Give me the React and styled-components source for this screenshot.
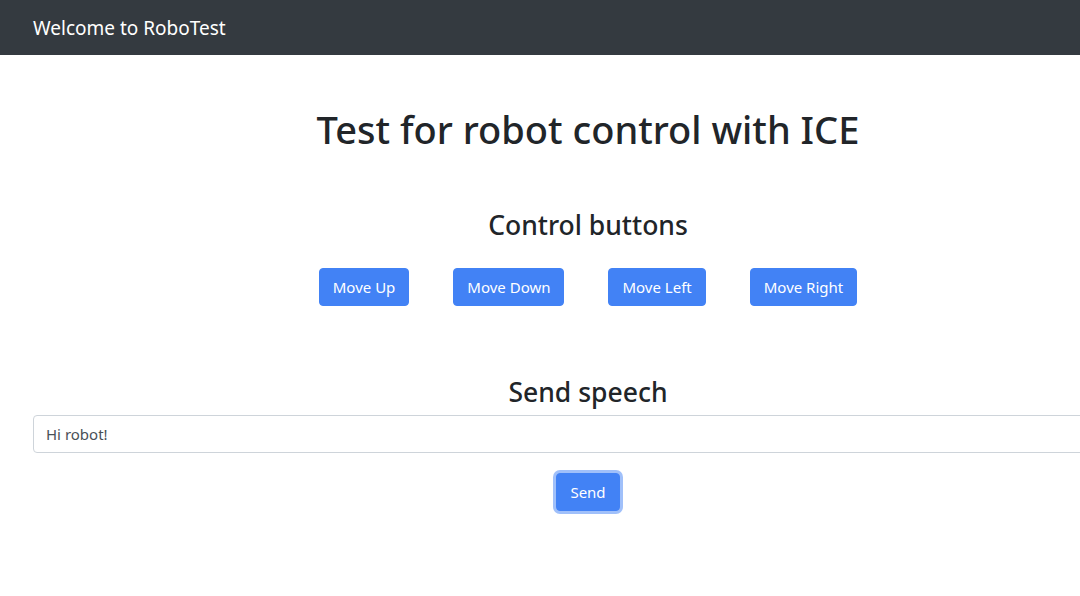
import styled, { createGlobalStyle } from "styled-components"

const GlobalStyle = createGlobalStyle`
  * { box-sizing: border-box; }
  body {
    margin: 0;
    font-family: "Noto Sans", "Liberation Sans", sans-serif;
    color: #212529;
    background: #fff;
    overflow: hidden;
  }
`

const Navbar = styled.nav`
  height: 55px;
  background: #343a40;
  display: flex;
  align-items: center;
  padding: 0 33px;
`

const Brand = styled.span`
  color: #fff;
  font-size: 19px;
  line-height: 1;
  margin-top: 1px;
`

const Container = styled.main`
  width: 1110px;
  margin-left: 33px;
  padding-bottom: 40px;
  display: flex;
  flex-direction: column;
  align-items: center;
`

const Title = styled.h1`
  font-size: 38px;
  font-weight: 500;
  line-height: 48px;
  margin: 50px 0 0;
`

const SubTitle = styled.h3`
  font-size: 26.5px;
  font-weight: 500;
  line-height: 34px;
  margin: ${(p) => p.top}px 0 0;
`

const ButtonRow = styled.div`
  display: flex;
  gap: 44px;
  margin-top: 26px;
`

const Button = styled.button`
  font-family: inherit;
  font-size: 15px;
  line-height: 24px;
  height: 38px;
  padding: 6px 13px;
  color: #fff;
  background: #4282f5;
  border: 1px solid #4282f5;
  border-radius: 4px;
  box-shadow: ${(p) => (p.focused ? "0 0 0 3px rgba(66, 130, 245, 0.5)" : "none")};
  margin-top: ${(p) => p.top || 0}px;
`

const Input = styled.input`
  width: 100%;
  height: 38px;
  margin-top: 6px;
  padding: 6px 12px;
  font-family: inherit;
  font-size: 15px;
  color: #495057;
  border: 1px solid #ced4da;
  border-radius: 4px;
  outline: none;
`

const moves = ["Move Up", "Move Down", "Move Left", "Move Right"]

const App = () => {
  return (
    <>
      <GlobalStyle />
      <Navbar>
        <Brand>Welcome to RoboTest</Brand>
      </Navbar>
      <Container>
        <Title>Test for robot control with ICE</Title>
        <SubTitle top={55}>Control buttons</SubTitle>
        <ButtonRow>
          {moves.map((m) => (
            <Button key={m}>{m}</Button>
          ))}
        </ButtonRow>
        <SubTitle top={69}>Send speech</SubTitle>
        <Input defaultValue="Hi robot!" />
        <Button focused top={20}>Send</Button>
      </Container>
    </>
  )
}

export default App
